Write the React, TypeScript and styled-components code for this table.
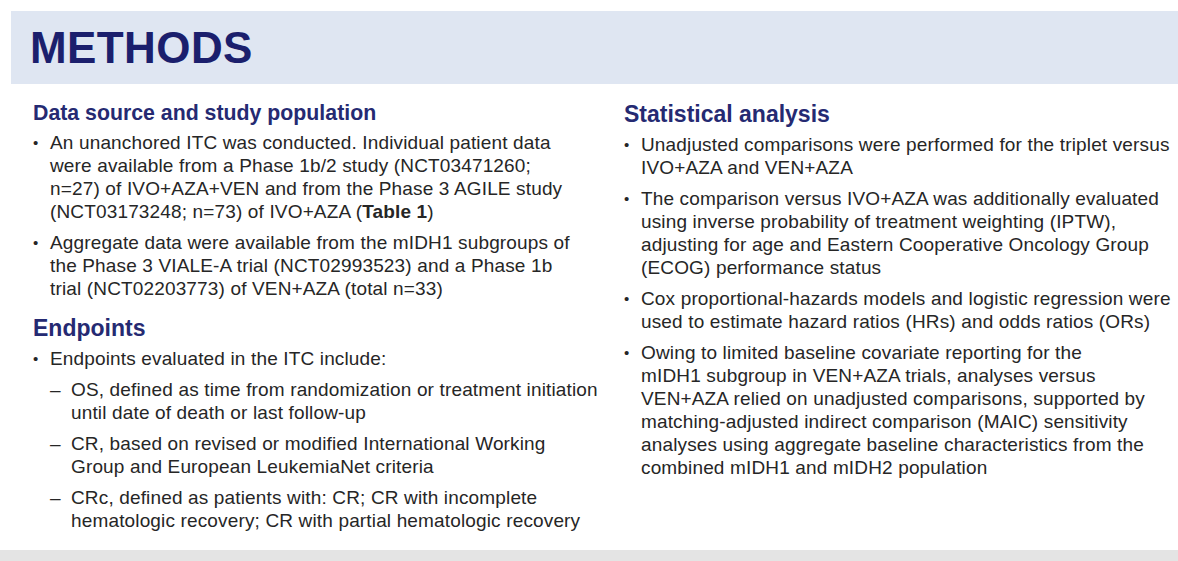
import React from "react";
import styled, { createGlobalStyle } from "styled-components";

const GlobalStyle = createGlobalStyle`
  html, body {
    margin: 0;
    padding: 0;
    background: #ffffff;
  }
  body {
    font-family: "Liberation Sans", Arial, sans-serif;
  }
`;

const Page = styled.div`
  width: 1178px;
  height: 561px;
  display: flex;
  flex-direction: column;
  padding-top: 11px;
  box-sizing: border-box;
  overflow: hidden;
`;

const Banner = styled.header`
  margin-left: 11px;
  height: 73px;
  flex: 0 0 auto;
  display: flex;
  align-items: center;
  padding-left: 19px;
  background-color: #dfe6f2;
`;

const Title = styled.h1`
  margin: 0;
  font-size: 44px;
  font-weight: 700;
  color: #1b1f6d;
  letter-spacing: 0.4px;
`;

const Body = styled.main`
  flex: 1;
  display: grid;
  grid-template-columns: 575px 550px;
  column-gap: 16px;
  padding: 16px 0 0 33px;
`;

const Column = styled.section`
  display: flex;
  flex-direction: column;
`;

const Heading = styled.h2<{ $size?: number; $gap?: number }>`
  margin: ${(p) => p.$gap ?? 0}px 0 5px;
  font-size: ${(p) => p.$size ?? 23}px;
  line-height: ${(p) => ((p.$size ?? 23) > 22 ? 28 : 26)}px;
  font-weight: 700;
  color: #252a72;
`;

const List = styled.ul<{ $indent?: number }>`
  margin: 0;
  padding: 0 0 0 ${(p) => p.$indent ?? 0}px;
  list-style: none;
  display: flex;
  flex-direction: column;
  gap: 8px;
`;

const Item = styled.li`
  display: flex;
  flex-direction: column;
  gap: 8px;
`;

const Row = styled.div`
  display: flex;
  font-size: 19px;
  line-height: 23px;
  letter-spacing: 0.15px;
  color: #262626;
  white-space: nowrap;
`;

const Marker = styled.span<{ $sub?: boolean }>`
  flex: 0 0 ${(p) => (p.$sub ? 21 : 17)}px;
  font-size: ${(p) => (p.$sub ? 19 : 15)}px;
`;

const Text = styled.span`
  flex: 1;
`;

const Footer = styled.footer`
  flex: 0 0 11px;
  background-color: #e4e4e4;
`;

type Lines = React.ReactNode[];

const Point = ({ lines, sub }: { lines: Lines; sub?: boolean }) => (
  <Row>
    <Marker $sub={sub}>{sub ? "–" : "•"}</Marker>
    <Text>
      {lines.map((line, i) => (
        <React.Fragment key={i}>
          {i > 0 && <br />}
          {line}
        </React.Fragment>
      ))}
    </Text>
  </Row>
);

const sources: Lines[] = [
  [
    "An unanchored ITC was conducted. Individual patient data",
    "were available from a Phase 1b/2 study (NCT03471260;",
    "n=27) of IVO+AZA+VEN and from the Phase 3 AGILE study",
    <>
      (NCT03173248; n=73) of IVO+AZA (<b>Table 1</b>)
    </>,
  ],
  [
    "Aggregate data were available from the mIDH1 subgroups of",
    "the Phase 3 VIALE-A trial (NCT02993523) and a Phase 1b",
    "trial (NCT02203773) of VEN+AZA (total n=33)",
  ],
];

const endpoints: Lines[] = [
  [
    "OS, defined as time from randomization or treatment initiation",
    "until date of death or last follow-up",
  ],
  [
    "CR, based on revised or modified International Working",
    "Group and European LeukemiaNet criteria",
  ],
  [
    "CRc, defined as patients with: CR; CR with incomplete",
    "hematologic recovery; CR with partial hematologic recovery",
  ],
];

const statistics: Lines[] = [
  ["Unadjusted comparisons were performed for the triplet versus", "IVO+AZA and VEN+AZA"],
  [
    "The comparison versus IVO+AZA was additionally evaluated",
    "using inverse probability of treatment weighting (IPTW),",
    "adjusting for age and Eastern Cooperative Oncology Group",
    "(ECOG) performance status",
  ],
  [
    "Cox proportional-hazards models and logistic regression were",
    "used to estimate hazard ratios (HRs) and odds ratios (ORs)",
  ],
  [
    "Owing to limited baseline covariate reporting for the",
    "mIDH1 subgroup in VEN+AZA trials, analyses versus",
    "VEN+AZA relied on unadjusted comparisons, supported by",
    "matching-adjusted indirect comparison (MAIC) sensitivity",
    "analyses using aggregate baseline characteristics from the",
    "combined mIDH1 and mIDH2 population",
  ],
];

export default function App() {
  return (
    <>
      <GlobalStyle />
      <Page>
        <Banner>
          <Title>METHODS</Title>
        </Banner>
        <Body>
          <Column>
            <Heading $size={21.3}>Data source and study population</Heading>
            <List>
              {sources.map((lines, i) => (
                <Item key={i}>
                  <Point lines={lines} />
                </Item>
              ))}
            </List>
            <Heading $gap={14}>Endpoints</Heading>
            <List>
              <Item>
                <Point lines={["Endpoints evaluated in the ITC include:"]} />
                <List $indent={17}>
                  {endpoints.map((lines, i) => (
                    <li key={i}>
                      <Point lines={lines} sub />
                    </li>
                  ))}
                </List>
              </Item>
            </List>
          </Column>
          <Column>
            <Heading>Statistical analysis</Heading>
            <List>
              {statistics.map((lines, i) => (
                <Item key={i}>
                  <Point lines={lines} />
                </Item>
              ))}
            </List>
          </Column>
        </Body>
        <Footer />
      </Page>
    </>
  );
}
